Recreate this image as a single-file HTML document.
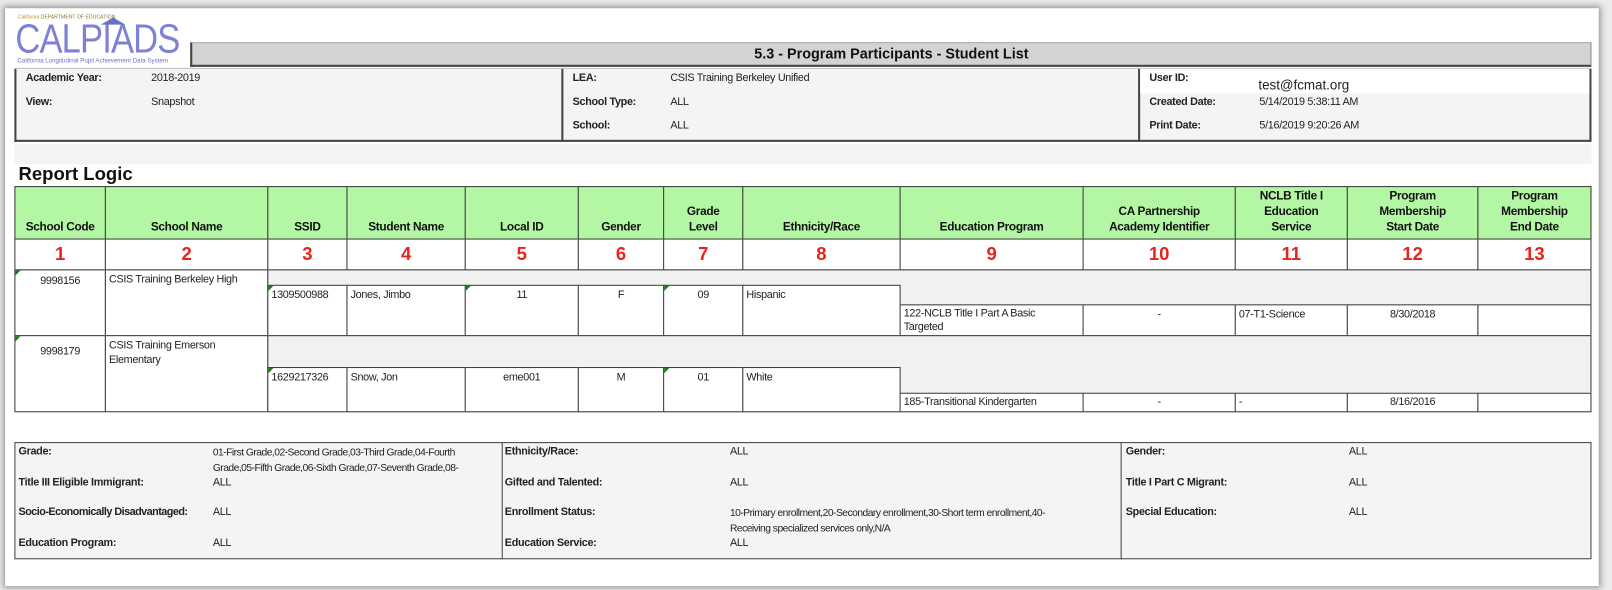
<!DOCTYPE html>
<html><head><meta charset="utf-8"><style>
*{box-sizing:border-box;margin:0;padding:0}
body{width:1612px;height:590px;background:#ececec;overflow:hidden;font-family:"Liberation Sans",sans-serif;color:#222;font-size:10.5px;letter-spacing:-0.3px}
#wrap{position:absolute;left:0;top:0;width:1568px;height:574px;transform:scale(1.0281);transform-origin:0 0}
.page{position:absolute;left:5px;top:8px;width:1550px;height:562px;background:#fff;box-shadow:0 0 6px 2px rgba(0,0,0,.35)}
.a{position:absolute}
.c{position:absolute;border:1px solid #3a3a3a}
.h{background:#b3f7a5;display:flex;align-items:flex-end;justify-content:center;text-align:center;font-weight:bold;font-size:11.5px;line-height:15px;padding-bottom:3px;color:#111}
.n{background:#fff;display:flex;align-items:center;justify-content:center;color:#e8231c;font-weight:bold;font-size:18px;letter-spacing:0}
.w{background:#fff;padding:2px 3px;line-height:14px}
.ctr{text-align:center}
.g{background:#f1f1f1}
.b{font-weight:bold}
.tri{position:absolute;left:0;top:0;width:0;height:0;border-top:5px solid #1b7a1b;border-right:5px solid transparent}
</style></head><body>
<div id="wrap">
<div class="page"></div>

<!-- logo -->
<div class="a" style="left:17px;top:14px;font-size:5px;color:#8a7a3a;letter-spacing:0"><span style="color:#c0902a;font-style:italic">California</span> DEPARTMENT OF EDUCATION</div>
<div class="a" style="left:15px;top:18px;font-size:40px;line-height:40px;color:#7d82d4;letter-spacing:-1px;transform:scaleX(0.84);transform-origin:left">CALPIADS</div>
<div class="a" style="left:98px;top:17px;width:0;height:0;border-left:12px solid transparent;border-right:12px solid transparent;border-bottom:7px solid #6a70c8"></div>
<div class="a" style="left:17px;top:57px;font-size:6px;color:#6a70c8;letter-spacing:0">California Longitudinal Pupil Achievement Data System</div>

<!-- title bar -->
<div class="a" style="left:185px;top:41px;width:1363px;height:24px;background:#d3d3d3;border-left:2px solid #444;border-bottom:2px solid #444;border-right:1px solid #888;border-top:1px solid #aaa;text-align:center;font-weight:bold;font-size:14px;line-height:20px;letter-spacing:0;color:#111">5.3 - Program Participants - Student List</div>
<div class="a" style="left:14px;top:66px;width:1534px;height:1px;background:#bbb"></div>

<!-- info box -->
<div class="a" style="left:14px;top:67px;width:1534px;height:71px;background:#f4f4f4;border-left:2px solid #444;border-right:2px solid #444;border-bottom:2px solid #444"></div>
<div class="a" style="left:546px;top:67px;width:2px;height:71px;background:#444"></div>
<div class="a" style="left:1107px;top:67px;width:2px;height:71px;background:#444"></div>
<div class="a" style="left:1109px;top:67px;width:437px;height:24px;background:#fff"></div>
<div class="a b" style="left:25px;top:70px">Academic Year:</div><div class="a" style="left:147px;top:70px">2018-2019</div>
<div class="a b" style="left:25px;top:93px">View:</div><div class="a" style="left:147px;top:93px">Snapshot</div>
<div class="a b" style="left:557px;top:70px">LEA:</div><div class="a" style="left:652px;top:70px">CSIS Training Berkeley Unified</div>
<div class="a b" style="left:557px;top:93px">School Type:</div><div class="a" style="left:652px;top:93px">ALL</div>
<div class="a b" style="left:557px;top:116px">School:</div><div class="a" style="left:652px;top:116px">ALL</div>
<div class="a b" style="left:1118px;top:70px">User ID:</div><div class="a" style="left:1224px;top:75px;font-size:13px;letter-spacing:0">test@fcmat.org</div>
<div class="a b" style="left:1118px;top:93px">Created Date:</div><div class="a" style="left:1225px;top:93px">5/14/2019 5:38:11 AM</div>
<div class="a b" style="left:1118px;top:116px">Print Date:</div><div class="a" style="left:1225px;top:116px">5/16/2019 9:20:26 AM</div>
<div class="a" style="left:14px;top:140px;width:1534px;height:20px;background:#f4f4f4"></div>

<div class="a b" style="left:18px;top:159px;font-size:18px;letter-spacing:0;color:#111">Report Logic</div>

<!-- header -->
<div class="c h" style="left:14px;top:181px;width:89px;height:52px">School Code</div>
<div class="c h" style="left:102px;top:181px;width:159px;height:52px">School Name</div>
<div class="c h" style="left:260px;top:181px;width:78px;height:52px">SSID</div>
<div class="c h" style="left:337px;top:181px;width:116px;height:52px">Student Name</div>
<div class="c h" style="left:452px;top:181px;width:111px;height:52px">Local ID</div>
<div class="c h" style="left:562px;top:181px;width:84px;height:52px">Gender</div>
<div class="c h" style="left:645px;top:181px;width:78px;height:52px">Grade<br>Level</div>
<div class="c h" style="left:722px;top:181px;width:154px;height:52px">Ethnicity/Race</div>
<div class="c h" style="left:875px;top:181px;width:179px;height:52px">Education Program</div>
<div class="c h" style="left:1053px;top:181px;width:149px;height:52px">CA Partnership<br>Academy Identifier</div>
<div class="c h" style="left:1201px;top:181px;width:110px;height:52px">NCLB Title I<br>Education<br>Service</div>
<div class="c h" style="left:1310px;top:181px;width:128px;height:52px">Program<br>Membership<br>Start Date</div>
<div class="c h" style="left:1437px;top:181px;width:111px;height:52px">Program<br>Membership<br>End Date</div>
<!-- numbers -->
<div class="c n" style="left:14px;top:232px;width:89px;height:31px">1</div>
<div class="c n" style="left:102px;top:232px;width:159px;height:31px">2</div>
<div class="c n" style="left:260px;top:232px;width:78px;height:31px">3</div>
<div class="c n" style="left:337px;top:232px;width:116px;height:31px">4</div>
<div class="c n" style="left:452px;top:232px;width:111px;height:31px">5</div>
<div class="c n" style="left:562px;top:232px;width:84px;height:31px">6</div>
<div class="c n" style="left:645px;top:232px;width:78px;height:31px">7</div>
<div class="c n" style="left:722px;top:232px;width:154px;height:31px">8</div>
<div class="c n" style="left:875px;top:232px;width:179px;height:31px">9</div>
<div class="c n" style="left:1053px;top:232px;width:149px;height:31px">10</div>
<div class="c n" style="left:1201px;top:232px;width:110px;height:31px">11</div>
<div class="c n" style="left:1310px;top:232px;width:128px;height:31px">12</div>
<div class="c n" style="left:1437px;top:232px;width:111px;height:31px">13</div>

<!-- group 1 -->
<div class="c w ctr" style="left:14px;top:262px;width:89px;height:65px;padding-top:3px"><span class="tri"></span>9998156</div>
<div class="c w" style="left:102px;top:262px;width:159px;height:65px">CSIS Training Berkeley High</div>
<div class="c g" style="left:260px;top:262px;width:1288px;height:65px"></div>
<div class="c w" style="left:260px;top:277px;width:78px;height:50px"><span class="tri"></span>1309500988</div>
<div class="c w" style="left:337px;top:277px;width:116px;height:50px">Jones, Jimbo</div>
<div class="c w ctr" style="left:452px;top:277px;width:111px;height:50px"><span class="tri"></span>11</div>
<div class="c w ctr" style="left:562px;top:277px;width:84px;height:50px">F</div>
<div class="c w ctr" style="left:645px;top:277px;width:78px;height:50px"><span class="tri"></span>09</div>
<div class="c w" style="left:722px;top:277px;width:154px;height:50px">Hispanic</div>
<div class="c w" style="left:875px;top:296px;width:179px;height:31px;line-height:13px">122-NCLB Title I Part A Basic<br>Targeted</div>
<div class="c w ctr" style="left:1053px;top:296px;width:149px;height:31px">-</div>
<div class="c w" style="left:1201px;top:296px;width:110px;height:31px">07-T1-Science</div>
<div class="c w ctr" style="left:1310px;top:296px;width:128px;height:31px">8/30/2018</div>
<div class="c w" style="left:1437px;top:296px;width:111px;height:31px"></div>

<!-- group 2 -->
<div class="c w ctr" style="left:14px;top:326px;width:89px;height:75px;padding-top:8px"><span class="tri"></span>9998179</div>
<div class="c w" style="left:102px;top:326px;width:159px;height:75px">CSIS Training Emerson<br>Elementary</div>
<div class="c g" style="left:260px;top:326px;width:1288px;height:75px"></div>
<div class="c w" style="left:260px;top:357px;width:78px;height:44px"><span class="tri"></span>1629217326</div>
<div class="c w" style="left:337px;top:357px;width:116px;height:44px">Snow, Jon</div>
<div class="c w ctr" style="left:452px;top:357px;width:111px;height:44px">eme001</div>
<div class="c w ctr" style="left:562px;top:357px;width:84px;height:44px">M</div>
<div class="c w ctr" style="left:645px;top:357px;width:78px;height:44px"><span class="tri"></span>01</div>
<div class="c w" style="left:722px;top:357px;width:154px;height:44px">White</div>
<div class="c w" style="left:875px;top:382px;width:179px;height:19px;padding-top:1px">185-Transitional Kindergarten</div>
<div class="c w ctr" style="left:1053px;top:382px;width:149px;height:19px;padding-top:1px">-</div>
<div class="c w" style="left:1201px;top:382px;width:110px;height:19px;padding-top:1px">-</div>
<div class="c w ctr" style="left:1310px;top:382px;width:128px;height:19px;padding-top:1px">8/16/2016</div>
<div class="c w" style="left:1437px;top:382px;width:111px;height:19px"></div>

<!-- filters -->
<div class="a" style="left:14px;top:430px;width:1534px;height:114px;background:#f4f4f4;border:1px solid #444"></div>
<div class="a" style="left:488px;top:430px;width:1px;height:114px;background:#444"></div>
<div class="a" style="left:1090px;top:430px;width:1px;height:114px;background:#444"></div>
<div class="a b" style="left:18px;top:433px">Grade:</div>
<div class="a" style="left:207px;top:433px;width:285px;line-height:15px;font-size:10px;letter-spacing:-0.5px;white-space:nowrap">01-First Grade,02-Second Grade,03-Third Grade,04-Fourth<br>Grade,05-Fifth Grade,06-Sixth Grade,07-Seventh Grade,08-</div>
<div class="a b" style="left:18px;top:463px">Title III Eligible Immigrant:</div><div class="a" style="left:207px;top:463px">ALL</div>
<div class="a b" style="left:18px;top:492px;letter-spacing:-0.5px">Socio-Economically Disadvantaged:</div><div class="a" style="left:207px;top:492px">ALL</div>
<div class="a b" style="left:18px;top:522px">Education Program:</div><div class="a" style="left:207px;top:522px">ALL</div>
<div class="a b" style="left:491px;top:433px">Ethnicity/Race:</div><div class="a" style="left:710px;top:433px">ALL</div>
<div class="a b" style="left:491px;top:463px">Gifted and Talented:</div><div class="a" style="left:710px;top:463px">ALL</div>
<div class="a b" style="left:491px;top:492px">Enrollment Status:</div>
<div class="a" style="left:710px;top:492px;line-height:15px;font-size:10px;letter-spacing:-0.5px;white-space:nowrap">10-Primary enrollment,20-Secondary enrollment,30-Short term enrollment,40-<br>Receiving specialized services only,N/A</div>
<div class="a b" style="left:491px;top:522px">Education Service:</div><div class="a" style="left:710px;top:522px">ALL</div>
<div class="a b" style="left:1095px;top:433px">Gender:</div><div class="a" style="left:1312px;top:433px">ALL</div>
<div class="a b" style="left:1095px;top:463px">Title I Part C Migrant:</div><div class="a" style="left:1312px;top:463px">ALL</div>
<div class="a b" style="left:1095px;top:492px">Special Education:</div><div class="a" style="left:1312px;top:492px">ALL</div>
</div>
</body></html>
